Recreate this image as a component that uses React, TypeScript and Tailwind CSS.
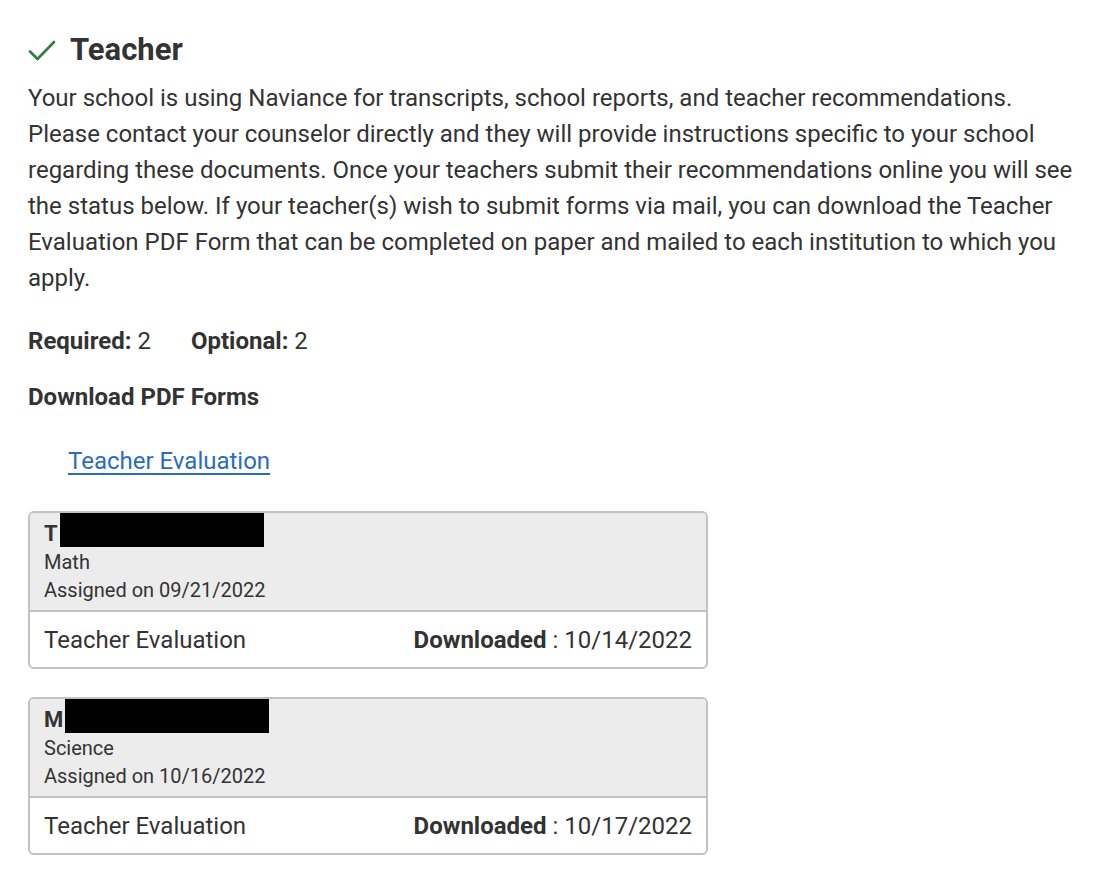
import * as React from 'react';

const font = { fontFamily: 'Roboto, "Liberation Sans", sans-serif' };

interface Assignment {
  initial: string;
  subject: string;
  assigned: string;
  downloaded: string;
}

const assignments: Assignment[] = [
  { initial: 'T', subject: 'Math', assigned: '09/21/2022', downloaded: '10/14/2022' },
  { initial: 'M', subject: 'Science', assigned: '10/16/2022', downloaded: '10/17/2022' },
];

function CheckIcon() {
  return (
    <svg width="28" height="22" viewBox="0 0 28 22" fill="none" className="shrink-0">
      <path d="M2 12.5l7.5 7.5L26 3" stroke="#2f7d45" strokeWidth="2.6" strokeLinecap="round" strokeLinejoin="round" />
    </svg>
  );
}

function AssignmentCard({ item }: { item: Assignment }) {
  return (
    <div className="w-[680px] rounded-[6px] border-2 border-[#c2c2c2] overflow-hidden">
      <div className="bg-[#ececec] px-[14px] pt-[7px] pb-[6px] border-b-2 border-[#c2c2c2]">
        <div className="h-[28px] flex items-start text-[22px] leading-[28px] font-bold text-[#333]">
          <span>{item.initial}</span>
          <span className="inline-block bg-black w-[204px] h-[34px] -mt-[7px] ml-[2px]" />
        </div>
        <div className="text-[20px] leading-[28px] text-[#333]">{item.subject}</div>
        <div className="text-[20px] leading-[28px] text-[#333]">Assigned on {item.assigned}</div>
      </div>
      <div className="flex items-center justify-between px-[14px] pt-[10px] pb-[9px] text-[24px] leading-[36px] text-[#333]">
        <span>Teacher Evaluation</span>
        <span>
          <span className="font-bold">Downloaded</span> : {item.downloaded}
        </span>
      </div>
    </div>
  );
}

export default function App() {
  return (
    <div className="min-h-screen bg-white text-[#333] pl-[28px] pr-[28px] pt-[32px]" style={font}>
      <h2 className="flex items-center gap-[14px] text-[31px] leading-[36px] font-bold">
        <CheckIcon />
        <span>Teacher</span>
      </h2>
      <p className="mt-[12px] text-[24px] leading-[36px]">
        Your school is using Naviance for transcripts, school reports, and teacher recommendations. Please contact your
        counselor directly and they will provide instructions specific to your school regarding these documents. Once
        your teachers submit their recommendations online you will see the status below. If your teacher(s) wish to
        submit forms via mail, you can download the Teacher Evaluation PDF Form that can be completed on paper and
        mailed to each institution to which you apply.
      </p>
      <div className="mt-[27px] flex gap-[40px] text-[24px] leading-[36px]">
        <span>
          <span className="font-bold">Required:</span> 2
        </span>
        <span>
          <span className="font-bold">Optional:</span> 2
        </span>
      </div>
      <div className="mt-[20px] text-[24px] leading-[36px] font-bold">Download PDF Forms</div>
      <div className="mt-[28px] pl-[40px] text-[24px] leading-[36px]">
        <a href="#" className="text-[#2b6cc0] underline underline-offset-[4px]">
          Teacher Evaluation
        </a>
      </div>
      <div className="mt-[32px] flex flex-col gap-[28px]">
        {assignments.map((a) => (
          <AssignmentCard key={a.subject} item={a} />
        ))}
      </div>
    </div>
  );
}
